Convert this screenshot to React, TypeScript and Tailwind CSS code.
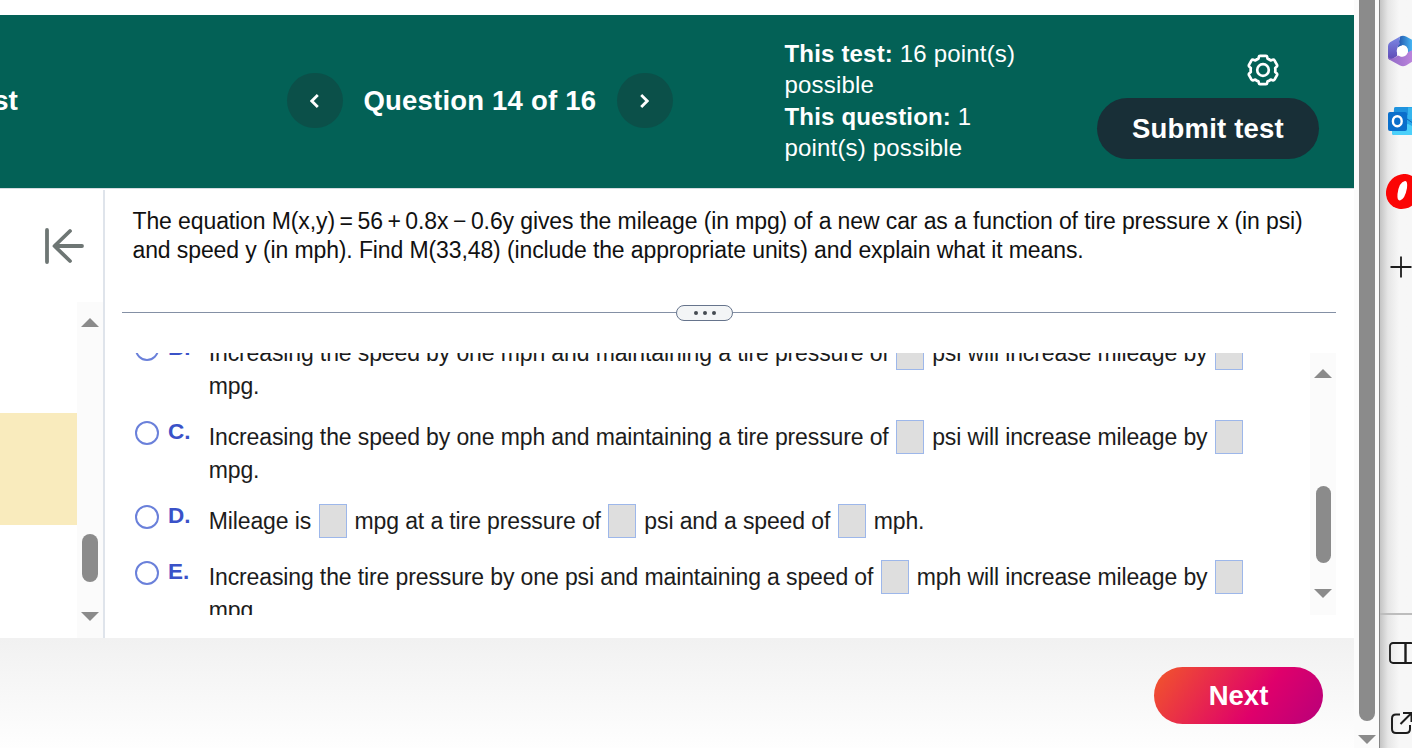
import { ReactNode } from 'react'

function Blank() {
  return <span className="mr-[8px] ml-[7.5px] inline-block h-[34px] w-[28px] shrink-0 border border-[#9db7ea] bg-[#dedede]" />
}

interface AnswerProps {
  letter: string
  children: ReactNode
  rest?: string
}

function Answer({ letter, children, rest }: AnswerProps) {
  return (
    <label className={`flex shrink-0 items-start ${rest ? 'h-[84px]' : 'h-[56px]'}`}>
      <span className="mt-[1px] h-[23.5px] w-[23.5px] shrink-0 rounded-full border-2 border-[#6a80da] bg-white" />
      <span className="ml-[9.5px] w-[40.7px] shrink-0 text-[22.5px] leading-[24px] font-bold text-[#3a52c8]">{letter}.</span>
      <span className="text-[23px] tracking-[-0.12px] whitespace-nowrap text-[#1c1c1c]">
        <span className="flex h-[34px] items-center leading-[34px]">{children}</span>
        {rest && <span className="block h-[33px] leading-[33px]">{rest}</span>}
      </span>
    </label>
  )
}

function Arrow({ up }: { up?: boolean }) {
  return (
    <svg viewBox="0 0 18 9" className="h-[9px] w-[18px] shrink-0" fill="#8b8b8b">
      <path d={up ? 'M9 0L18 9H0Z' : 'M0 0H18L9 9Z'} />
    </svg>
  )
}

function Gear() {
  return (
    <svg viewBox="0 0 32 32" className="h-8 w-8" fill="none" stroke="#fff" strokeWidth="2.7" strokeLinejoin="round">
      <path d="M13 1.8H19Q20 1.8 20.2 3L20.5 4.6Q22.3 5.2 23.7 6.4L25.6 5.7Q26.8 5.3 27.5 6.4L30 10.9Q30.5 12 29.6 12.8L28.2 14Q28.5 16 28.2 18L29.6 19.2Q30.5 20 30 21.1L27.5 25.6Q26.8 26.7 25.6 26.3L23.7 25.6Q22.3 26.8 20.5 27.4L20.2 29Q20 30.2 19 30.2H13Q12 30.2 11.8 29L11.5 27.4Q9.7 26.8 8.3 25.6L6.4 26.3Q5.2 26.7 4.5 25.6L2 21.1Q1.5 20 2.4 19.2L3.8 18Q3.5 16 3.8 14L2.4 12.8Q1.5 12 2 10.9L4.5 6.4Q5.2 5.3 6.4 5.7L8.3 6.4Q9.7 5.2 11.5 4.6L11.8 3Q12 1.8 13 1.8Z" />
      <circle cx="16" cy="16" r="5.8" />
    </svg>
  )
}

// ── Browser side rail ──────────────────────────────────────────────
function Rail() {
  return (
    <aside className="flex w-[33px] shrink-0 flex-col overflow-hidden border-l border-[#858585] bg-linear-to-r from-[#c4c4c4] via-[#e6e6e6] via-25% to-[#f7f7f7] to-60%">
      <div className="flex h-[615px] shrink-0 flex-col border-b-2 border-[#bdbdbd] pl-[5px]">
        <svg viewBox="0 0 32 32" className="mt-[35px] ml-[3px] h-8 w-8 shrink-0">
          <defs>
            <linearGradient id="m1" x1="0" y1="0" x2="0" y2="1">
              <stop offset="0" stopColor="#7c8be6" />
              <stop offset="1" stopColor="#5f49b4" />
            </linearGradient>
            <linearGradient id="m2" x1="0" y1="0" x2="1" y2="0">
              <stop offset="0" stopColor="#8f68c6" />
              <stop offset="1" stopColor="#c48ae0" />
            </linearGradient>
            <linearGradient id="m3" x1="0" y1="0" x2="1" y2="0">
              <stop offset="0" stopColor="#1f4ba4" />
              <stop offset="0.75" stopColor="#45b5f4" />
            </linearGradient>
          </defs>
          <path d="M12 1.5Q15 0 18 1.5L27 6.5Q29 8 29 11V22L20 17Q20 10 14.5 10L9 16Z" fill="url(#m3)" />
          <path d="M13 1L2 7.2Q0 8.6 0 11V22Q0 25 3 25L9 21V14Q9 11 12 9Q10 4 13 1Z" fill="url(#m1)" />
          <path d="M0 22Q2 25 7 22.5L10 20.5Q16 24 20 17L29 13V22Q29 24 27 25L18 30.5Q15 32 12 30.5L2 25Q0 23.5 0 22Z" fill="url(#m2)" />
          <circle cx="14.3" cy="16" r="5.6" fill="#fff" />
        </svg>
        <svg viewBox="0 0 32 28" className="mt-[40px] ml-[3px] h-7 w-8 shrink-0">
          <path d="M6 2Q6 0 8 0H32V28H6Q4 28 4 26Z" fill="#28a8ea" />
          <path d="M6 2Q6 0 8 0H20V8H6Z" fill="#1f93de" />
          <path d="M20 1H32V12H20Z" fill="#35b5ee" />
          <path d="M4 23L20 17L32 23V28H6Q4 28 4 26Z" fill="#4bd0fa" />
          <path d="M19 12L32 21" stroke="#1268b8" strokeWidth="1" />
          <rect x="0" y="5" width="19" height="19" rx="2" fill="#0a6fcb" />
          <ellipse cx="9.3" cy="14.2" rx="4.4" ry="5" fill="none" stroke="#fff" strokeWidth="2.4" />
        </svg>
        <svg viewBox="0 0 36 36" className="mt-[39px] h-9 w-9 shrink-0">
          <ellipse cx="18" cy="17.5" rx="16.5" ry="18" transform="rotate(35 18 17.5)" fill="#fb0505" />
          <path d="M20 7Q14 8 12.5 20Q12 27 15 26.5Q20 25 22 14Q22.8 6.5 20 7Z" fill="#fff" />
        </svg>
        <svg viewBox="0 0 22 22" className="mt-[46px] ml-[5px] h-[22px] w-[22px] shrink-0" stroke="#1c1c1c" strokeWidth="1.8">
          <path d="M11 0.5V21.5M0.5 11H21.5" />
        </svg>
      </div>
      <svg viewBox="0 0 26 22" className="mt-[27px] ml-[9px] h-[22px] w-[26px] shrink-0" fill="none" stroke="#1c1c1c" strokeWidth="1.8">
        <rect x="1" y="1" width="24" height="20" rx="3" />
        <path d="M16.5 1V21" strokeWidth="2.4" />
      </svg>
      <svg viewBox="0 0 22 22" className="mt-[48px] ml-[11px] h-[22px] w-[22px] shrink-0" fill="none" stroke="#1c1c1c" strokeWidth="2">
        <path d="M9 2.5H5Q1 2.5 1 6.5V17Q1 21 5 21H15Q19 21 19 17V13" />
        <path d="M12 1H20.5V10M20.5 1L9.5 12" />
      </svg>
    </aside>
  )
}

export default function App() {
  return (
    <div className="flex h-[748px] w-[1412px] overflow-hidden bg-white font-['Liberation_Sans',Arial,sans-serif]">
      <main className="flex w-[1354px] shrink-0 flex-col">
        {/* ── Header ─────────────────────────────────────────────── */}
        <header className="mt-[15px] flex h-[173px] shrink-0 items-start bg-[#036156] text-white">
          <div className="mt-[70px] w-[287px] text-[28px] leading-[32px] font-bold">
            <span className="-ml-[7px]">st</span>
          </div>
          <div className="mt-[58px] flex w-[497px] items-center">
            <button className="flex h-[55px] w-14 items-center justify-center rounded-full bg-[#0b5049] pr-[2px]">
              <svg viewBox="0 0 9 14" className="h-[14px] w-[9px]" fill="none" stroke="#fff" strokeWidth="2.8">
                <path d="M7.8 1L1.8 7L7.8 13" />
              </svg>
            </button>
            <h1 className="w-[274px] pl-[20.5px] text-[27.5px] leading-[32px] font-bold tracking-[0.2px] whitespace-nowrap">
              Question 14 of 16
            </h1>
            <button className="flex h-[55px] w-14 items-center justify-center rounded-full bg-[#0b5049] pr-[2px]">
              <svg viewBox="0 0 9 14" className="h-[14px] w-[9px]" fill="none" stroke="#fff" strokeWidth="2.8">
                <path d="M1.2 1L7.2 7L1.2 13" />
              </svg>
            </button>
          </div>
          <div className="mt-[22.5px] w-[313px] pl-[0.5px] text-[24px] leading-[31.5px] tracking-[0.18px] whitespace-nowrap">
            <p><b>This test:</b> 16 point(s)</p>
            <p>possible</p>
            <p><b>This question:</b> 1</p>
            <p>point(s) possible</p>
          </div>
          <div className="mt-[39px] flex w-[222px] flex-col">
            <div className="ml-[150px] h-[44px]">
              <Gear />
            </div>
            <button className="h-[61px] rounded-full bg-[#182f37] text-[27.5px] font-bold tracking-[0.2px]">Submit test</button>
          </div>
        </header>

        <div className="flex h-[450px] shrink-0 border-t border-[#d5dbe0]">
          {/* ── Question list, mostly scrolled out of view ─────────── */}
          <nav className="mt-px flex w-[105px] shrink-0 flex-col border-r-2 border-[#dfe4eb]">
            <svg viewBox="0 0 40 36" className="mt-[38px] ml-[44px] h-9 w-10 shrink-0" fill="none" stroke="#6e7674" strokeWidth="3.8" strokeLinecap="round" strokeLinejoin="round">
              <path d="M3 2V34M38 18H11M26 3L10.5 18L26 33" />
            </svg>
            <div className="mt-[38px] flex flex-1">
              <div className="w-[77px]">
                <div className="mt-[111px] h-[112px] bg-[#f9ebbd]" />
              </div>
              <div className="flex flex-1 flex-col items-center bg-[#fbfbfb]">
                <div className="mt-[16px] flex"><Arrow up /></div>
                <div className="mt-[207px] h-[48px] w-[16px] rounded-full bg-[#8b8b8b]" />
                <div className="mt-[30px] flex"><Arrow /></div>
              </div>
            </div>
          </nav>

          <section className="flex flex-1 flex-col pr-[18px] pl-[17px]">
            <div className="mt-[18px] ml-[10.5px] h-[97px] text-[23px] leading-[29px] tracking-[-0.11px] whitespace-nowrap text-[#111]">
              <p>
                The equation M(x,y)<span className="mx-[4.6px]">=</span>56<span className="mx-[4.6px]">+</span>0.8x<span className="mx-[4.6px]">−</span>0.6y gives the mileage (in mpg) of a new car as a function of tire pressure x (in psi)
              </p>
              <p>and speed y (in mph). Find M(33,48) (include the appropriate units) and explain what it means.</p>
            </div>

            {/* Splitter */}
            <div className="flex h-[17px] items-center">
              <div className="h-px w-[554px] bg-[#8490a5]" />
              <div className="mt-px flex h-[16px] w-[57px] items-center justify-center gap-[5px] rounded-lg border border-[#66748c] bg-[#f3f5f6]">
                <i className="h-1 w-1 rounded-full bg-[#454b52]" />
                <i className="h-1 w-1 rounded-full bg-[#454b52]" />
                <i className="h-1 w-1 rounded-full bg-[#454b52]" />
              </div>
              <div className="h-px flex-1 bg-[#8490a5]" />
            </div>

            {/* Answers */}
            <div className="mt-[32px] flex h-[262px] overflow-hidden">
              <div className="-mt-[17px] flex w-[1188px] shrink-0 flex-col pl-[13px]">
                <Answer letter="B" rest="mpg.">
                  Increasing the speed by one mph and maintaining a tire pressure of<Blank />psi will increase mileage by<Blank />
                </Answer>
                <Answer letter="C" rest="mpg.">
                  Increasing the speed by one mph and maintaining a tire pressure of<Blank />psi will increase mileage by<Blank />
                </Answer>
                <Answer letter="D">
                  Mileage is<Blank />mpg at a tire pressure of<Blank />psi and a speed of<Blank />mph.
                </Answer>
                <Answer letter="E" rest="mpg.">
                  Increasing the tire pressure by one psi and maintaining a speed of<Blank />mph will increase mileage by<Blank />
                </Answer>
              </div>
              <div className="flex flex-1 flex-col items-center bg-[#fbfbfb]">
                <div className="mt-[16px] flex"><Arrow up /></div>
                <div className="mt-[108px] h-[77px] w-[15px] rounded-full bg-[#8b8b8b]" />
                <div className="mt-[26px] flex"><Arrow /></div>
              </div>
            </div>
          </section>
        </div>

        {/* ── Footer ─────────────────────────────────────────────── */}
        <footer className="flex flex-1 items-start justify-end bg-linear-to-b from-[#f1f1f1] to-[#fefefe] pt-[29px] pr-[31px]">
          <button className="h-[57px] w-[169px] rounded-full bg-[linear-gradient(125deg,#f0502f_5%,#df006b_62%,#b8007a)] text-[27.5px] font-bold text-white">
            Next
          </button>
        </footer>
      </main>

      <div className="flex w-[25px] shrink-0 flex-col items-center bg-[#fbfbfb]">
        <div className="h-[721px] w-[16px] rounded-b-full bg-[#8b8b8b]" />
        <div className="mt-[14px] flex"><Arrow /></div>
      </div>
      <Rail />
    </div>
  )
}
